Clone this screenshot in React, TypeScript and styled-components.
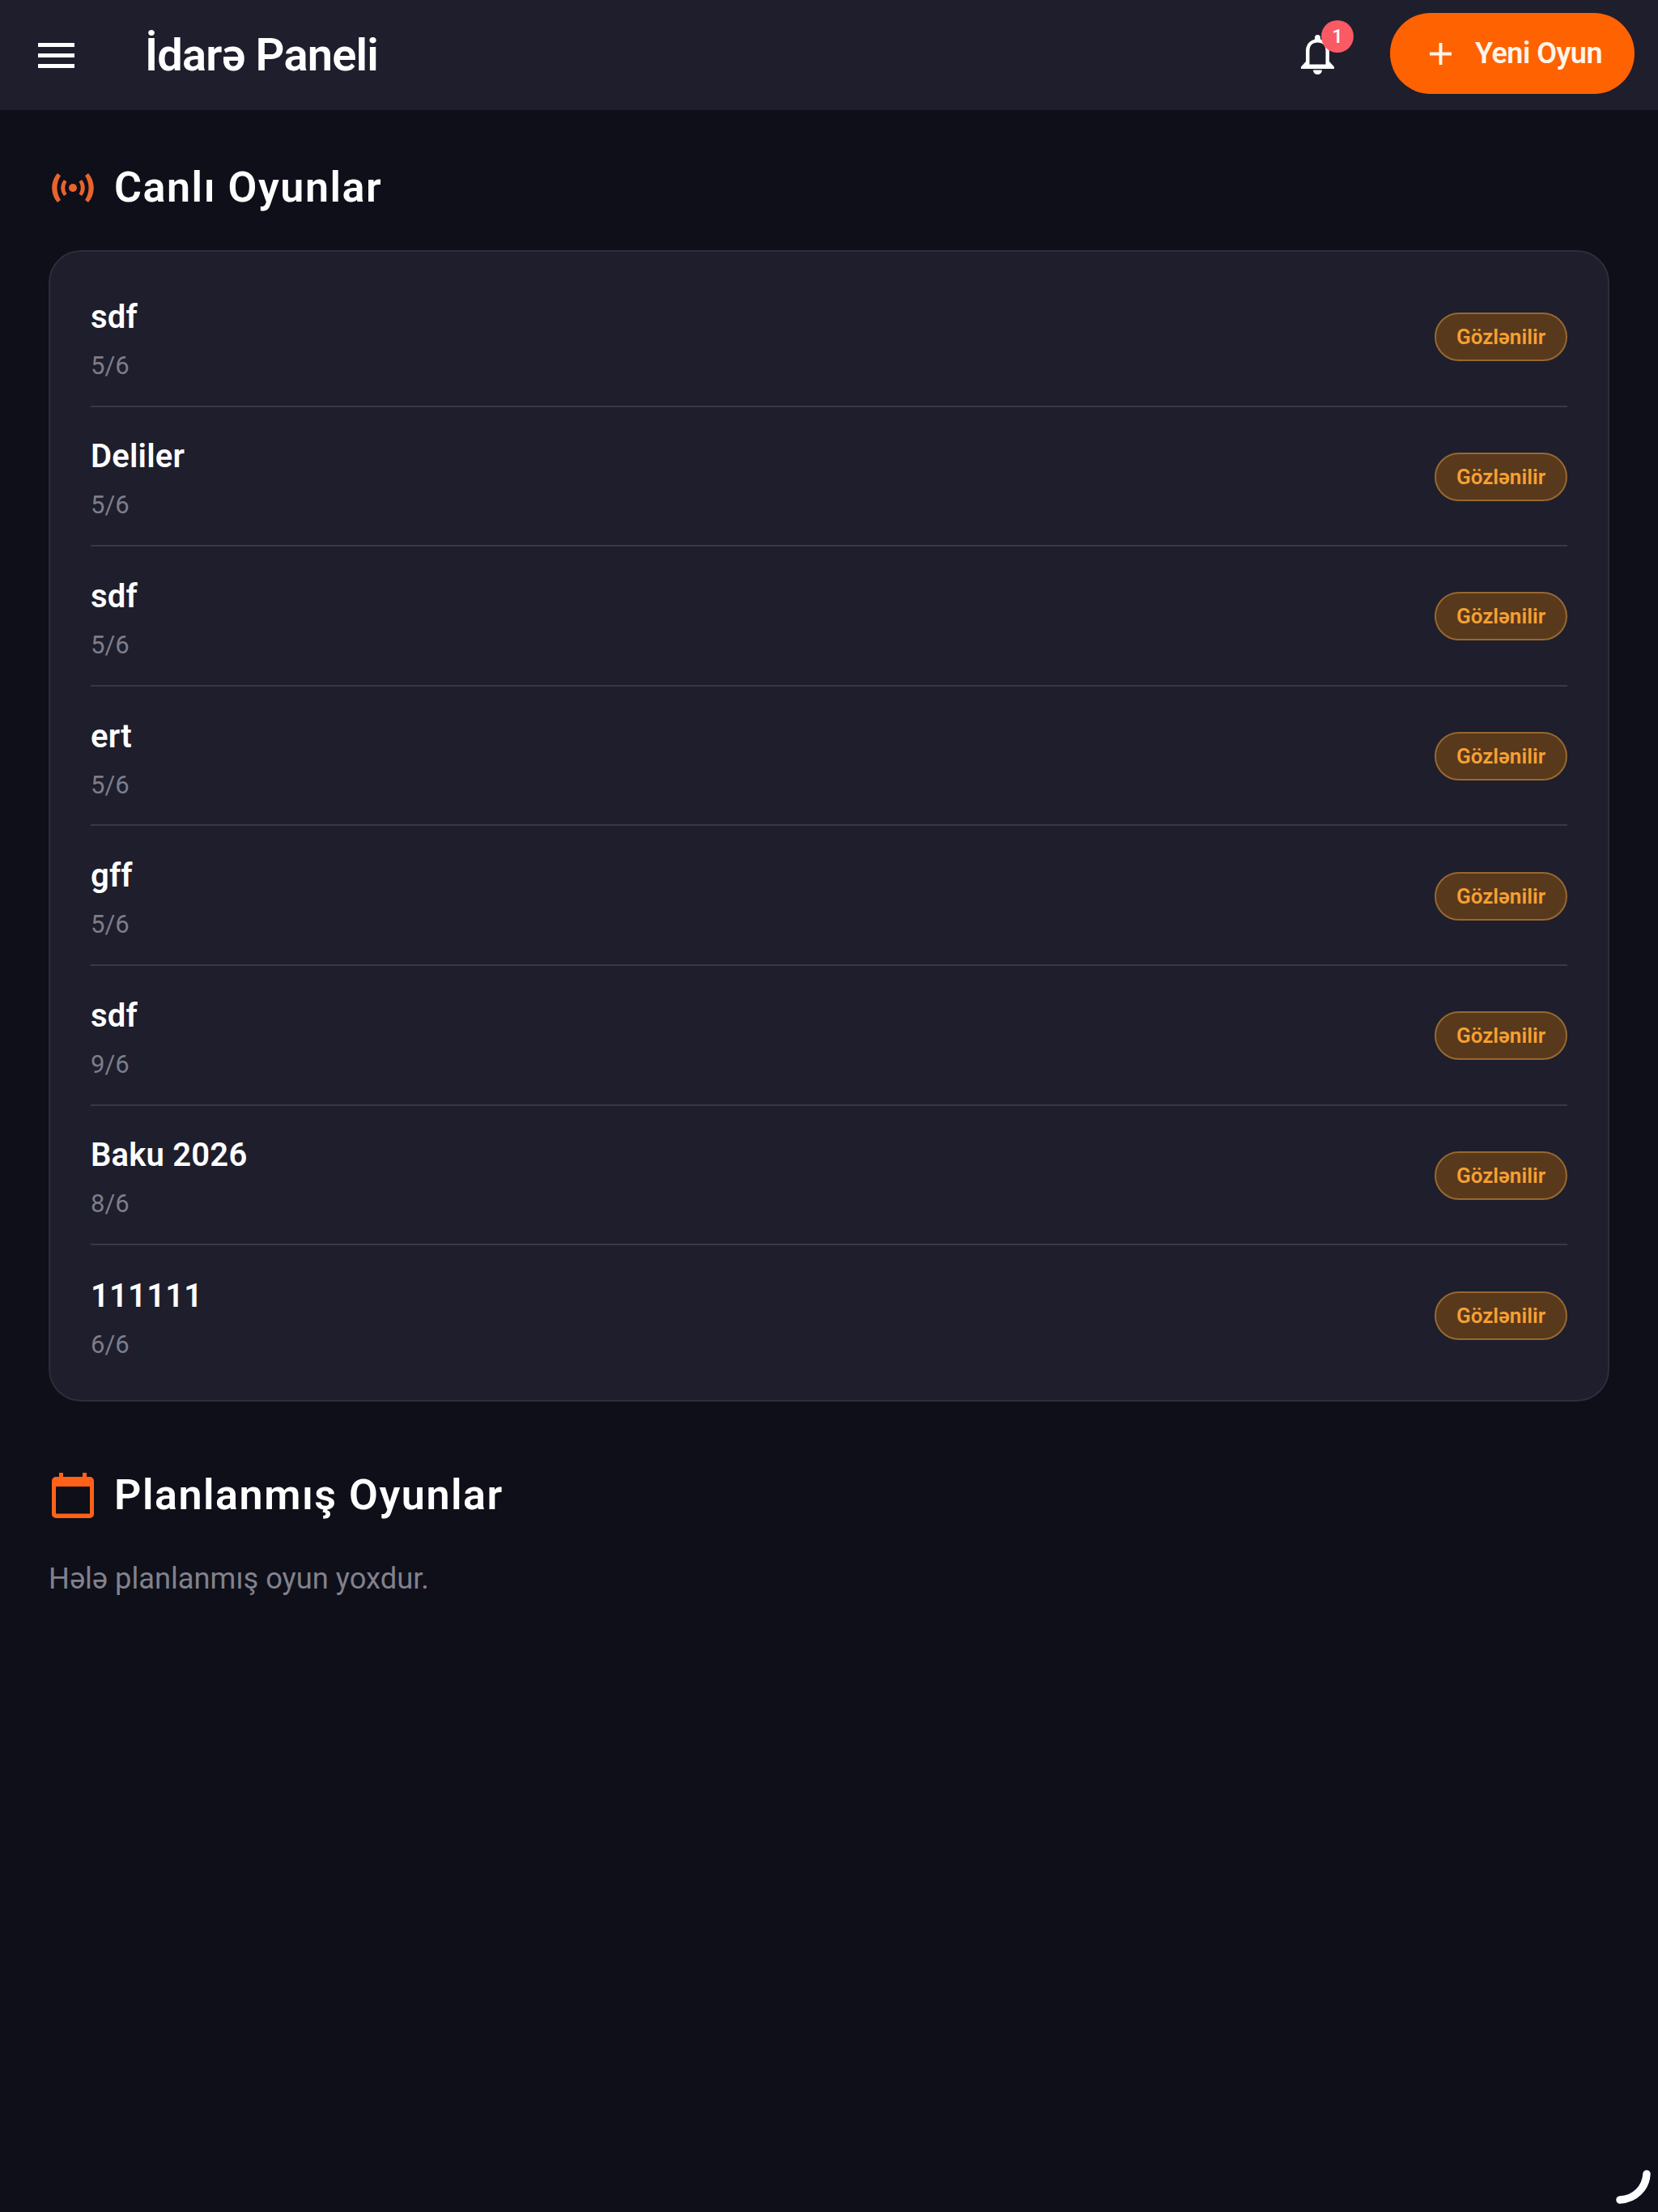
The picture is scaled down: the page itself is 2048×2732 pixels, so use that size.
import React from "react";
import { createGlobalStyle, styled } from "styled-components";

const GlobalStyle = createGlobalStyle`
  * {
    box-sizing: border-box;
  }

  html,
  body {
    margin: 0;
    padding: 0;
    background: #0e0f19;
    font-family: Roboto, "Noto Sans", sans-serif;
    color: #fff;
  }
`;

const Page = styled.div`
  position: relative;
  min-height: 2732px;
  background: #0e0f19;
`;

const Header = styled.header`
  display: flex;
  align-items: center;
  height: 136px;
  padding: 0 29px 0 47px;
  background: #1e1e2d;
`;

const MenuButton = styled.div`
  display: flex;
  flex-direction: column;
  justify-content: space-between;
  width: 45px;
  height: 31px;

  span {
    display: block;
    height: 5px;
    background: #fff;
  }
`;

const Title = styled.h1`
  flex: 1;
  margin: 0 0 0 87px;
  font-size: 56px;
  font-weight: 600;
  line-height: 1;
  letter-spacing: -0.8px;
`;

const BellWrap = styled.div`
  position: relative;
  display: flex;
  width: 52px;
  height: 60px;
  margin-right: 64px;
  margin-bottom: 4px;
`;

const BellBadge = styled.span`
  position: absolute;
  top: -11px;
  right: -19px;
  display: flex;
  align-items: center;
  justify-content: center;
  width: 40px;
  height: 40px;
  border-radius: 50%;
  background: #f95a63;
  font-size: 24px;
  font-weight: 500;
`;

const NewGameButton = styled.div`
  display: flex;
  align-items: center;
  justify-content: center;
  gap: 29px;
  width: 302px;
  height: 100px;
  margin-bottom: 4px;
  padding-left: 9px;
  border-radius: 50px;
  background: #ff6200;
  color: #fff5ea;
  font-size: 36px;
  font-weight: 600;
  letter-spacing: -0.5px;
`;

const Content = styled.main`
  padding: 60px 60px 0;
`;

const SectionTitle = styled.h2<{ $spaced?: boolean }>`
  display: flex;
  align-items: center;
  gap: 25px;
  height: 72px;
  margin: ${(p) => (p.$spaced ? "80px 0 0" : "0")};
  padding-left: 4px;
  font-size: 52px;
  font-weight: 600;
  letter-spacing: 1.55px;
  line-height: 1;
`;

const GameCard = styled.section`
  margin-top: 41px;
  padding: 19px 50px 18px;
  background: #1e1e2d;
  border: 2px solid #2d2d3b;
  border-radius: 40px;
`;

const GameRow = styled.div`
  display: flex;
  align-items: center;
  justify-content: space-between;
  height: 172.6px;
  border-bottom: 2px solid #383846;

  &:last-child {
    border-bottom: none;
  }
`;

const GameInfo = styled.div`
  display: flex;
  flex-direction: column;
  gap: 18px;
  margin-top: 9px;
`;

const GameName = styled.div`
  font-size: 40px;
  font-weight: 600;
  line-height: 46px;
  letter-spacing: 0.2px;
`;

const GameCount = styled.div`
  color: #7d7d8a;
  font-size: 31px;
  line-height: 38px;
`;

const StatusBadge = styled.span`
  display: flex;
  align-items: center;
  justify-content: center;
  width: 164px;
  height: 60px;
  margin-top: 2px;
  border: 2px solid #97682f;
  border-radius: 30px;
  background: #59391c;
  color: #f7a032;
  font-size: 26px;
  font-weight: 600;
`;

const EmptyText = styled.p`
  margin: 45px 0 0;
  color: #81818d;
  font-size: 36.3px;
  line-height: 44px;
`;

const Spinner = styled.svg`
  position: absolute;
  right: 0;
  bottom: 0;
  width: 100px;
  height: 100px;
`;

const BellIcon = () => (
  <svg width="52" height="60" viewBox="0 0 52 60" fill="none">
    <path
      d="M26.500 7a3.500 3.500 0 0 0-3.500 3.500v1.900C15.500 14.300 12 20.500 12 27v13l-6 6.500V49h41v-2.500L41 40V27c0-6.500-3.500-12.700-11-14.600v-1.900A3.500 3.500 0 0 0 26.500 7Z"
      fill="#fff"
    />
    <path d="M16.500 43.500V27c0-6.500 3.500-10.500 10-10.500s10 4 10 10.500v16.500Z" fill="#1e1e2d" />
    <path d="M21 50.500h11a5.500 5.500 0 0 1-11 0Z" fill="#fff" />
  </svg>
);

const PlusIcon = () => (
  <svg width="27" height="27" viewBox="0 0 27 27" fill="none" stroke="#fff5ea" strokeWidth="4">
    <path d="M13.500 0v27M0 13.500h27" />
  </svg>
);

const BroadcastIcon = () => (
  <svg width="52" height="36" viewBox="0 0 52 36" fill="#e8642c">
    <path d="M7 0C-2 10-2 26 7 36l4-3C5 24 5 12 11 3Z" />
    <path d="M15 8c-5 6-5 14 0 20l3.500-2.500c-3-4.500-3-10.500 0-15Z" />
    <path d="M37 8c5 6 5 14 0 20l-3.500-2.500c3-4.500 3-10.500 0-15Z" />
    <path d="M45 0c9 10 9 26 0 36l-4-3c6-9 6-21 0-30Z" />
    <circle cx="26" cy="18" r="5" />
  </svg>
);

const CalendarIcon = () => (
  <svg width="52" height="56" viewBox="0 0 52 56" fill="none">
    <path
      d="M9 0h5v5h24V0h5v5h4a5 5 0 0 1 5 5v41a5 5 0 0 1-5 5H5a5 5 0 0 1-5-5V10a5 5 0 0 1 5-5h4Z"
      fill="#ff6118"
    />
    <rect x="5" y="17" width="42" height="33.500" fill="#0e0f19" />
  </svg>
);

const games = [
  { name: "sdf", count: "5/6" },
  { name: "Deliler", count: "5/6" },
  { name: "sdf", count: "5/6" },
  { name: "ert", count: "5/6" },
  { name: "gff", count: "5/6" },
  { name: "sdf", count: "9/6" },
  { name: "Baku 2026", count: "8/6" },
  { name: "111111", count: "6/6" },
];

const App = () => {
  return (
    <Page>
      <GlobalStyle />
      <Header>
        <MenuButton>
          <span />
          <span />
          <span />
        </MenuButton>
        <Title>İdarə Paneli</Title>
        <BellWrap>
          <BellIcon />
          <BellBadge>1</BellBadge>
        </BellWrap>
        <NewGameButton>
          <PlusIcon />
          <span>Yeni Oyun</span>
        </NewGameButton>
      </Header>

      <Content>
        <SectionTitle>
          <BroadcastIcon />
          Canlı Oyunlar
        </SectionTitle>

        <GameCard>
          {games.map((game, i) => (
            <GameRow key={i}>
              <GameInfo>
                <GameName>{game.name}</GameName>
                <GameCount>{game.count}</GameCount>
              </GameInfo>
              <StatusBadge>Gözlənilir</StatusBadge>
            </GameRow>
          ))}
        </GameCard>

        <SectionTitle $spaced>
          <CalendarIcon />
          Planlanmış Oyunlar
        </SectionTitle>
        <EmptyText>Hələ planlanmış oyun yoxdur.</EmptyText>
      </Content>

      <Spinner viewBox="0 0 100 100" fill="none">
        <path d="M86 53C85 70 72 84 53 85" stroke="#fff" strokeWidth="9.500" strokeLinecap="round" />
      </Spinner>
    </Page>
  );
};

export default App;
